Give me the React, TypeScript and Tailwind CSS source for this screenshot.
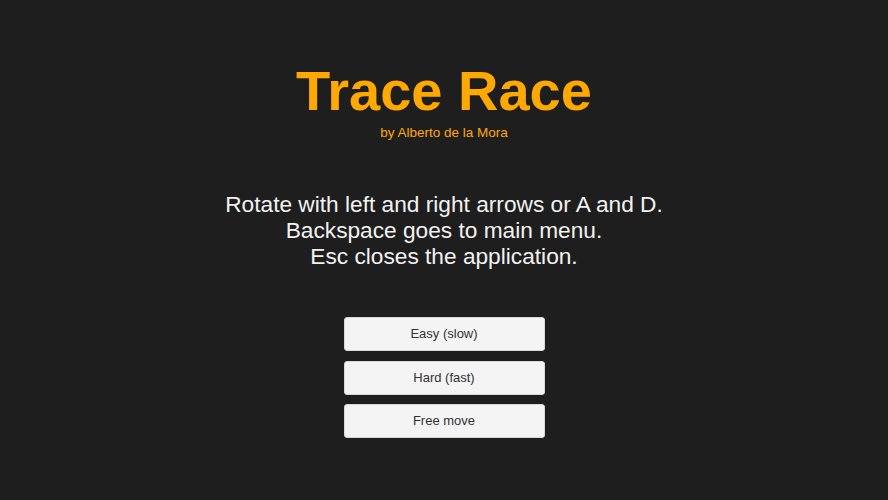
export default function App() {
  const modes = ['Easy (slow)', 'Hard (fast)', 'Free move'];

  return (
    <div className="flex h-[500px] w-full flex-col items-center bg-[#1e1e1e] pt-[63px] font-['Liberation_Sans',Arial,sans-serif]">
      <h1 className="text-[56px] font-bold leading-none text-[#ffa800]">Trace Race</h1>
      <p className="mt-[5.5px] text-[13.5px] leading-[16px] text-[#ffa800]">by Alberto de la Mora</p>

      <div className="mt-[50.5px] text-center text-[22.7px] leading-[26px] text-[#f2f2f2]">
        <p>Rotate with left and right arrows or A and D.</p>
        <p>Backspace goes to main menu.</p>
        <p>Esc closes the application.</p>
      </div>

      <div className="mt-[48px] flex flex-col gap-[9.5px]">
        {modes.map((mode) => (
          <button
            key={mode}
            type="button"
            className="h-[34px] w-[201px] rounded-[3px] border border-[#d8d8d8] bg-[#f4f4f4] text-[13px] text-[#323232]"
          >
            {mode}
          </button>
        ))}
      </div>
    </div>
  );
}
